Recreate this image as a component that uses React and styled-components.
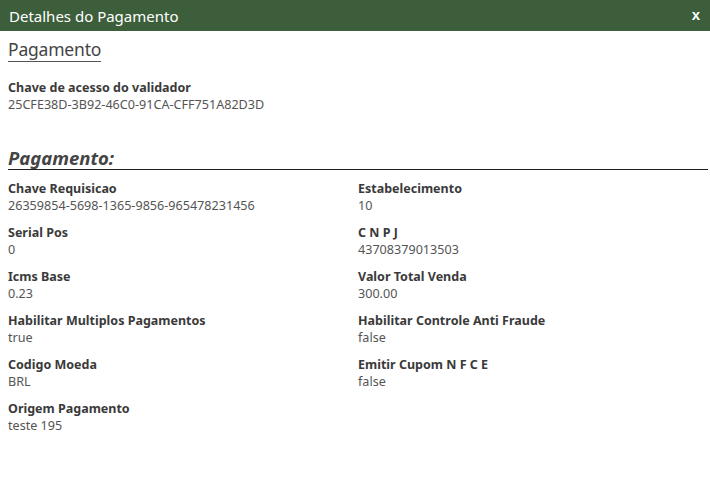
import React from "react";
import styled, { createGlobalStyle } from "styled-components";

const Global = createGlobalStyle`
  html, body { margin: 0; padding: 0; background: #fff; }
  body { font-family: "Noto Sans", "Open Sans", sans-serif; }
`;

const Dialog = styled.div`
  width: 710px;
  height: 478px;
  background: #fff;
  display: flex;
  flex-direction: column;
`;

const Header = styled.div`
  height: 31px;
  background: #3d5e3b;
  display: flex;
  align-items: center;
  justify-content: space-between;
  padding: 0 10px 0 9px;
  box-sizing: border-box;
`;

const Title = styled.span`
  color: #fff;
  font-size: 15px;
`;

const Close = styled.button`
  background: none;
  border: 0;
  color: #fff;
  font-family: "Liberation Sans", sans-serif;
  font-weight: bold;
  font-size: 15px;
  padding: 0;
  line-height: 1;
  margin-top: -3px;
`;

const Body = styled.div`
  padding: 8px 2px 0 8px;
  display: flex;
  flex-direction: column;
`;

const SectionTitle = styled.h2`
  margin: 0;
  align-self: flex-start;
  font-weight: normal;
  font-size: 17.5px;
  color: #444;
  line-height: 21px;
  border-bottom: 1px solid #555;
  padding-bottom: 1px;
  letter-spacing: -0.2px;
`;

const Field = styled.div`
  display: flex;
  flex-direction: column;
  margin-top: ${(p) => p.$mt || 0}px;
`;

const Label = styled.span`
  font-weight: bold;
  font-size: 12.5px;
  line-height: 17px;
  color: #3a3a3a;
`;

const Value = styled.span`
  font-size: 12.6px;
  line-height: 17px;
  color: #555;
`;

const SubTitle = styled.h3`
  margin: 35px 0 0;
  font-size: 18.5px;
  font-weight: bold;
  font-style: italic;
  color: #444;
  line-height: 20px;
  border-bottom: 1px solid #222;
  padding-bottom: 1px;
`;

const Grid = styled.div`
  display: grid;
  grid-template-columns: 350px 1fr;
  row-gap: 10px;
  margin-top: 10px;
`;

const fields = [
  ["Chave Requisicao", "26359854-5698-1365-9856-965478231456"],
  ["Estabelecimento", "10"],
  ["Serial Pos", "0"],
  ["C N P J", "43708379013503"],
  ["Icms Base", "0.23"],
  ["Valor Total Venda", "300.00"],
  ["Habilitar Multiplos Pagamentos", "true"],
  ["Habilitar Controle Anti Fraude", "false"],
  ["Codigo Moeda", "BRL"],
  ["Emitir Cupom N F C E", "false"],
  ["Origem Pagamento", "teste 195"],
];

export default function App() {
  return (
    <>
      <Global />
      <Dialog>
        <Header>
          <Title>Detalhes do Pagamento</Title>
          <Close>x</Close>
        </Header>
        <Body>
          <SectionTitle>Pagamento</SectionTitle>
          <Field $mt={17}>
            <Label>Chave de acesso do validador</Label>
            <Value>25CFE38D-3B92-46C0-91CA-CFF751A82D3D</Value>
          </Field>
          <SubTitle>Pagamento:</SubTitle>
          <Grid>
            {fields.map(([l, v]) => (
              <Field key={l}>
                <Label>{l}</Label>
                <Value>{v}</Value>
              </Field>
            ))}
          </Grid>
        </Body>
      </Dialog>
    </>
  );
}
